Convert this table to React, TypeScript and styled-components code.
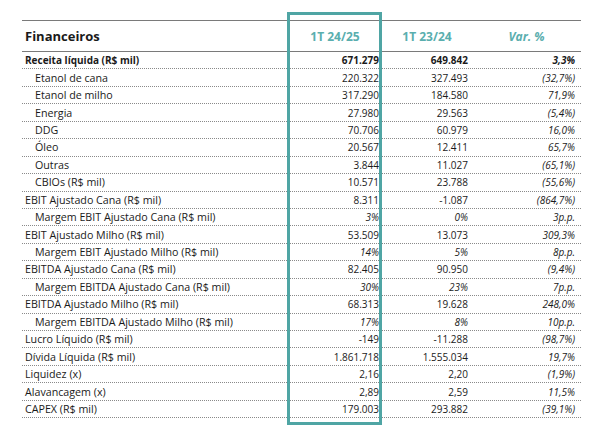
import { FC } from 'react';
import styled, { createGlobalStyle } from 'styled-components';

interface Row {
  label: string;
  cur: string;
  prev: string;
  varp: string;
  sub?: boolean;
  bold?: boolean;
  pct?: boolean;
}

const rows: Row[] = [
  { label: 'Receita líquida (R$ mil)', cur: '671.279', prev: '649.842', varp: '3,3%', bold: true },
  { label: 'Etanol de cana', cur: '220.322', prev: '327.493', varp: '(32,7%)', sub: true },
  { label: 'Etanol de milho', cur: '317.290', prev: '184.580', varp: '71,9%', sub: true },
  { label: 'Energia', cur: '27.980', prev: '29.563', varp: '(5,4%)', sub: true },
  { label: 'DDG', cur: '70.706', prev: '60.979', varp: '16,0%', sub: true },
  { label: 'Óleo', cur: '20.567', prev: '12.411', varp: '65,7%', sub: true },
  { label: 'Outras', cur: '3.844', prev: '11.027', varp: '(65,1%)', sub: true },
  { label: 'CBIOs (R$ mil)', cur: '10.571', prev: '23.788', varp: '(55,6%)', sub: true },
  { label: 'EBIT Ajustado Cana (R$ mil)', cur: '8.311', prev: '-1.087', varp: '(864,7%)' },
  { label: 'Margem EBIT Ajustado Cana (R$ mil)', cur: '3%', prev: '0%', varp: '3p.p.', sub: true, pct: true },
  { label: 'EBIT Ajustado Milho (R$ mil)', cur: '53.509', prev: '13.073', varp: '309,3%' },
  { label: 'Margem EBIT Ajustado Milho (R$ mil)', cur: '14%', prev: '5%', varp: '8p.p.', sub: true, pct: true },
  { label: 'EBITDA Ajustado Cana (R$ mil)', cur: '82.405', prev: '90.950', varp: '(9,4%)' },
  { label: 'Margem EBITDA Ajustado Cana (R$ mil)', cur: '30%', prev: '23%', varp: '7p.p.', sub: true, pct: true },
  { label: 'EBITDA Ajustado Milho (R$ mil)', cur: '68.313', prev: '19.628', varp: '248,0%' },
  { label: 'Margem EBITDA Ajustado Milho (R$ mil)', cur: '17%', prev: '8%', varp: '10p.p.', sub: true, pct: true },
  { label: 'Lucro Líquido (R$ mil)', cur: '-149', prev: '-11.288', varp: '(98,7%)' },
  { label: 'Dívida Líquida (R$ mil)', cur: '1.861.718', prev: '1.555.034', varp: '19,7%' },
  { label: 'Liquidez (x)', cur: '2,16', prev: '2,20', varp: '(1,9%)' },
  { label: 'Alavancagem (x)', cur: '2,89', prev: '2,59', varp: '11,5%' },
  { label: 'CAPEX (R$ mil)', cur: '179.003', prev: '293.882', varp: '(39,1%)' },
];

const GlobalStyle = createGlobalStyle`
  body {
    margin: 0;
    background: #ffffff;
    font-family: 'Open Sans', 'Liberation Sans', sans-serif;
    color: #1a1a1a;
  }
`;

const App: FC = () => (
  <Page>
    <GlobalStyle />
    <Table>
      <HighlightBox />
      <HeaderRow>
        <HeadLabel>Financeiros</HeadLabel>
        <HeadCell>1T 24/25</HeadCell>
        <HeadCell>1T 23/24</HeadCell>
        <HeadCell $italic>Var. %</HeadCell>
      </HeaderRow>
      {rows.map((r) => (
        <DataRow key={r.label} $bold={r.bold}>
          <Label $sub={r.sub} $bold={r.bold}>{r.label}</Label>
          <Value $italic={r.pct}>{r.cur}</Value>
          <Value $italic={r.pct} $pad={4}>{r.prev}</Value>
          <Value $italic $pad={6}>{r.varp}</Value>
        </DataRow>
      ))}
    </Table>
  </Page>
);

const Page = styled.div`
  padding: 20px 24px 0 22px;
  width: 605px;
  height: 427px;
  box-sizing: border-box;
  overflow: hidden;
`;

const Table = styled.div`
  position: relative;
  width: 559px;
  border-top: 1.5px solid #7a7a7a;
`;

const HighlightBox = styled.div`
  position: absolute;
  left: 265px;
  top: -9px;
  width: 95px;
  height: 413px;
  border: 3px solid #4fa5a4;
  box-sizing: border-box;
  pointer-events: none;
`;

const Grid = styled.div`
  display: grid;
  grid-template-columns: 266px 94px 90px 1fr;
  align-items: center;
`;

const HeaderRow = styled(Grid)`
  height: 30px;
  border-bottom: 1.5px solid #7a7a7a;
`;

const HeadLabel = styled.div`
  padding-left: 3px;
  font-size: 13px;
  font-weight: 700;
  color: #1a1a1a;
`;

const HeadCell = styled.div<{ $italic?: boolean }>`
  text-align: center;
  font-size: 12px;
  font-weight: 700;
  color: #5aaeae;
  font-style: ${({ $italic }) => ($italic ? 'italic' : 'normal')};
`;

const DataRow = styled(Grid)<{ $bold?: boolean }>`
  height: 16.45px;
  border-bottom: 1px dotted #8a8a8a;
  font-size: 10px;
  font-weight: ${({ $bold }) => ($bold ? 700 : 400)};
`;

const Label = styled.div<{ $sub?: boolean; $bold?: boolean }>`
  padding-left: ${({ $sub }) => ($sub ? '13px' : '3px')};
  font-size: ${({ $bold }) => ($bold ? '10px' : '10.7px')};
  white-space: nowrap;
`;

const Value = styled.div<{ $italic?: boolean; $pad?: number }>`
  text-align: right;
  padding-right: ${({ $pad }) => $pad ?? 3}px;
  font-style: ${({ $italic }) => ($italic ? 'italic' : 'normal')};
  white-space: nowrap;
`;

export default App;
